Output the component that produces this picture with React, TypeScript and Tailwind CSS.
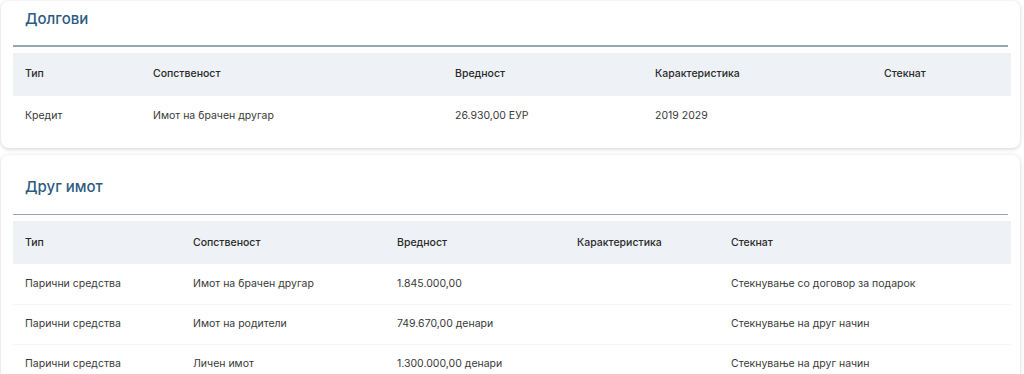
import React from "react";

type Col = { label: string; w: string };

const debtCols: Col[] = [
  { label: "Тип", w: "w-[128px]" },
  { label: "Сопственост", w: "w-[302px]" },
  { label: "Вредност", w: "w-[200px]" },
  { label: "Карактеристика", w: "w-[229px]" },
  { label: "Стекнат", w: "w-[139px]" },
];

const debtRows = [["Кредит", "Имот на брачен другар", "26.930,00 ЕУР", "2019 2029", ""]];

const otherCols: Col[] = [
  { label: "Тип", w: "w-[168px]" },
  { label: "Сопственост", w: "w-[204px]" },
  { label: "Вредност", w: "w-[180px]" },
  { label: "Карактеристика", w: "w-[154px]" },
  { label: "Стекнат", w: "w-[292px]" },
];

const otherRows = [
  ["Парични средства", "Имот на брачен другар", "1.845.000,00", "", "Стекнување со договор за подарок"],
  ["Парични средства", "Имот на родители", "749.670,00 денари", "", "Стекнување на друг начин"],
  ["Парични средства", "Личен имот", "1.300.000,00 денари", "", "Стекнување на друг начин"],
];

function Card({ title, cols, rows, first }: { title: string; cols: Col[]; rows: string[][]; first?: boolean }) {
  return (
    <div
      className={`mx-[1px] w-[1019px] rounded-lg bg-white px-3 pb-3 shadow-[0_1px_4px_rgba(0,0,0,0.18)] ${
        first ? "pt-[6px]" : "pt-[21px]"
      }`}
    >
      <div className="flex h-[24px] items-center px-3 text-[15px] font-medium text-[#2e5b82]">{title}</div>
      <div className="mt-[14px] h-[1.5px] bg-[#93a6b2]" />
      <table className="mt-[6px] w-[998px] table-fixed border-collapse text-[10.5px]">
        <thead>
          <tr className="h-[43px] bg-[#eef2f7]">
            {cols.map((c) => (
              <th key={c.label} className={`${c.w} px-3 text-left font-medium text-[#2a2a2a]`}>
                {c.label}
              </th>
            ))}
          </tr>
        </thead>
        <tbody>
          {rows.map((r, i) => (
            <tr key={i} className={`h-[40px] ${i < rows.length - 1 ? "border-b border-[#f6f6f6]" : ""}`}>
              {r.map((cell, j) => (
                <td key={j} className="px-3 text-[#3a3a3a]">
                  {cell}
                </td>
              ))}
            </tr>
          ))}
        </tbody>
      </table>
    </div>
  );
}

export default function App() {
  return (
    <div className="h-[374px] w-[1024px] overflow-hidden bg-white" style={{ fontFamily: "Inter, 'Noto Sans', sans-serif" }}>
      <div className="flex flex-col gap-[7px] pt-[1px]">
        <Card title="Долгови" cols={debtCols} rows={debtRows} first />
        <Card title="Друг имот" cols={otherCols} rows={otherRows} />
      </div>
    </div>
  );
}
